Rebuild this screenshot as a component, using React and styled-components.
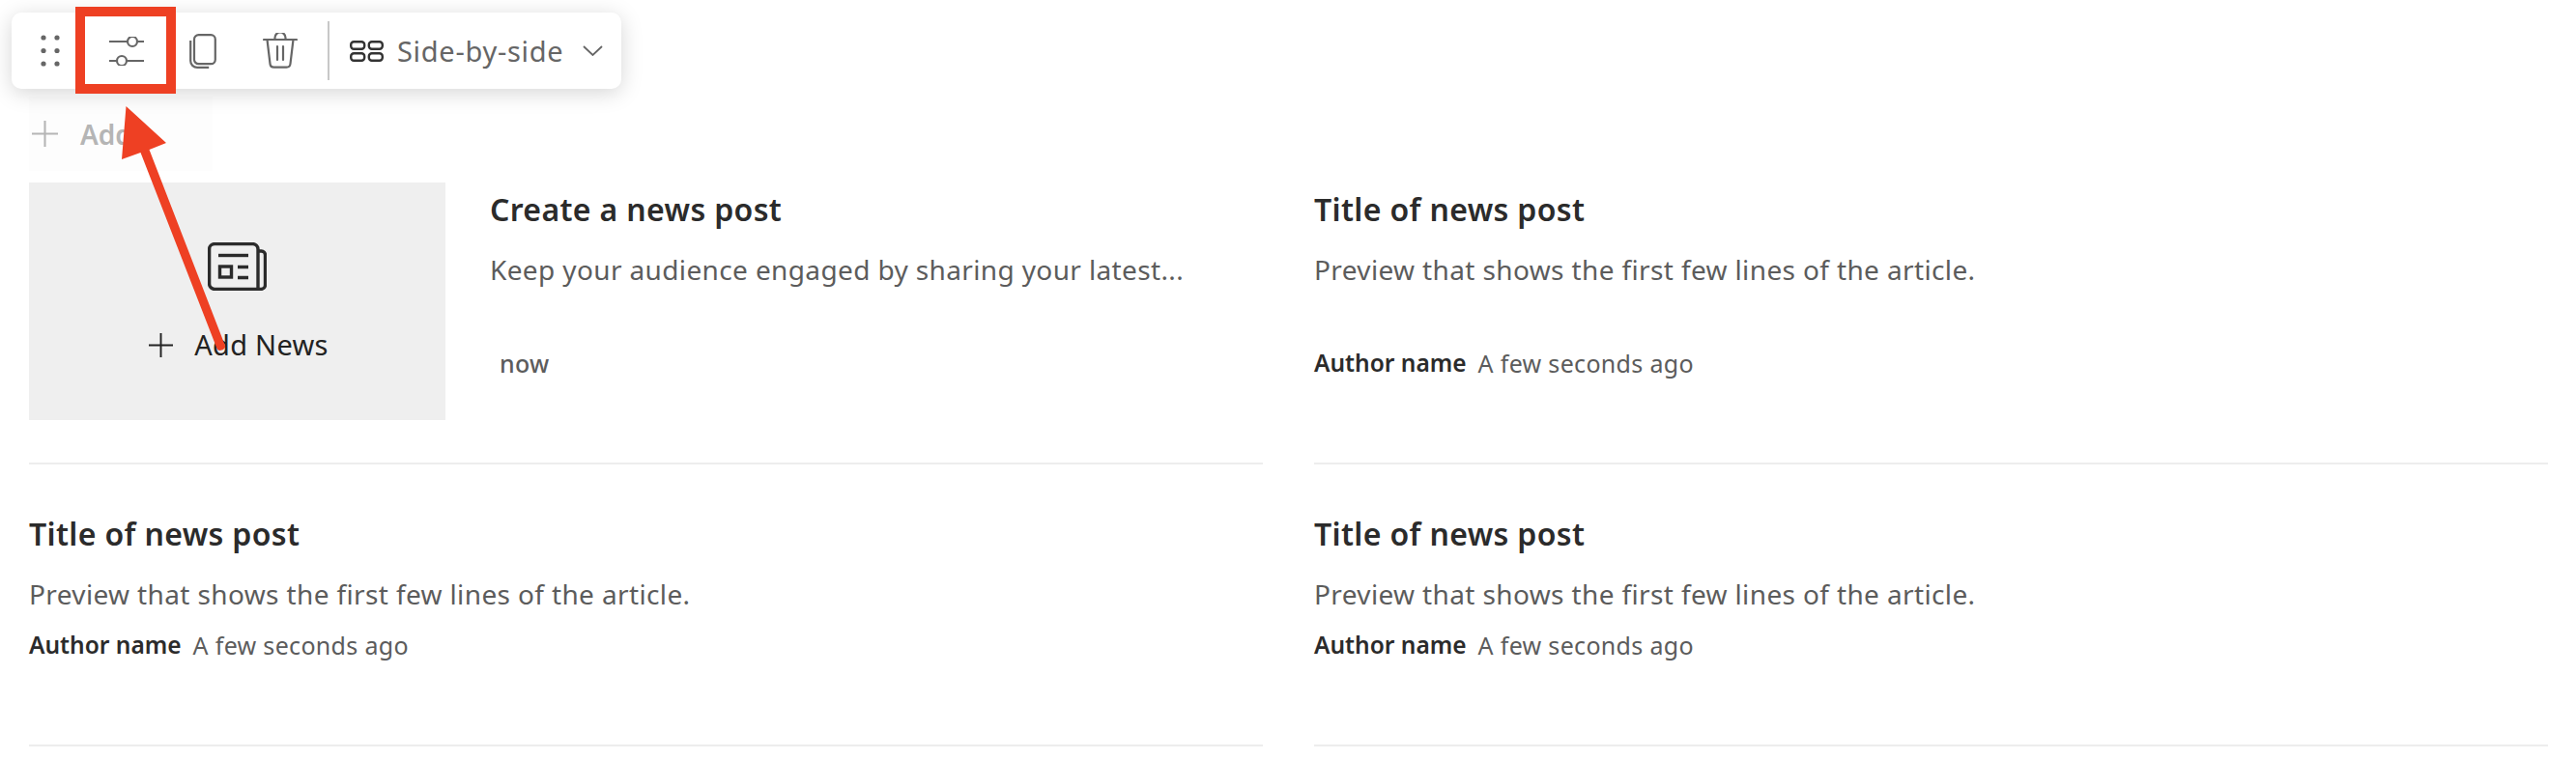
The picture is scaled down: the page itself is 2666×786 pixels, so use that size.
import React from "react";
import styled, { createGlobalStyle } from "styled-components";

const Global = createGlobalStyle`
  html, body { margin: 0; padding: 0; background: #fff; }
  body { font-family: "Noto Sans", "Open Sans", sans-serif; overflow: hidden; }
`;

const Page = styled.div`
  position: relative;
  width: 2666px;
  height: 786px;
  padding: 100px 29px 0 30px;
  box-sizing: border-box;
  overflow: hidden;
`;

const Toolbar = styled.div`
  position: absolute;
  left: 12px;
  top: 13px;
  width: 631px;
  height: 79px;
  display: flex;
  align-items: center;
  background: #fff;
  border-radius: 10px;
  box-shadow: 0 4px 22px rgba(0, 0, 0, 0.17);
  z-index: 3;
`;

const ToolButton = styled.div`
  width: ${(p) => p.$w}px;
  height: 100%;
  display: flex;
  align-items: center;
  justify-content: center;
  color: #666;
  flex: none;
`;

const ToolDivider = styled.div`
  width: 2px;
  height: 61px;
  margin-left: 9px;
  background: #c8c8c8;
  flex: none;
`;

const LayoutPicker = styled.div`
  display: flex;
  align-items: center;
  margin-left: 21px;
  color: #666;
`;

const LayoutLabel = styled.span`
  font-size: 29px;
  letter-spacing: 0.7px;
  line-height: 40px;
  color: #666;
  margin-left: 14px;
  margin-right: 20px;
  white-space: nowrap;
`;

const AddRow = styled.div`
  width: 190px;
  height: 77px;
  background: #fdfdfd;
  display: flex;
  align-items: center;
  padding-left: 3px;
  box-sizing: border-box;
  color: #b5b5b5;
`;

const AddLabel = styled.span`
  font-size: 28px;
  font-weight: 600;
  margin-left: 23px;
  color: #b5b5b5;
`;

const Grid = styled.div`
  display: grid;
  grid-template-columns: 1277px 1277px;
  column-gap: 53px;
  margin-top: 12px;
`;

const Card = styled.div`
  height: 292px;
  box-sizing: border-box;
  border-bottom: 2px solid #ededed;
  padding-top: ${(p) => p.$top}px;
  display: ${(p) => (p.$feature ? "flex" : "block")};
`;

const ImageBox = styled.div`
  width: 431px;
  height: 246px;
  background: #efefef;
  display: flex;
  flex-direction: column;
  align-items: center;
  padding-top: 62px;
  box-sizing: border-box;
  flex: none;
  color: #2b2b2b;
`;

const AddNews = styled.div`
  display: flex;
  align-items: center;
  margin-top: 36px;
  margin-left: 3px;
  color: #222;
`;

const AddNewsLabel = styled.span`
  font-size: 29px;
  letter-spacing: 0.3px;
  line-height: 40px;
  margin-left: 22px;
  color: #222;
`;

const FeatureText = styled.div`
  padding: 8px 0 0 46px;
`;

const Title = styled.div`
  font-size: 32px;
  font-weight: 600;
  letter-spacing: 0.35px;
  line-height: 40px;
  color: #2b2b2b;
  white-space: nowrap;
`;

const Preview = styled.div`
  font-size: 28px;
  letter-spacing: 0.37px;
  line-height: 38px;
  margin-top: 23px;
  color: #5c5c5c;
  white-space: nowrap;
`;

const Meta = styled.div`
  display: flex;
  gap: 12px;
  line-height: 34px;
  margin-top: ${(p) => p.$top}px;
  padding-left: ${(p) => p.$indent || 0}px;
`;

const Author = styled.span`
  font-size: 24.5px;
  font-weight: 600;
  color: #2b2b2b;
`;

const Time = styled.span`
  font-size: 25px;
  letter-spacing: 0.32px;
  color: #5c5c5c;
  font-weight: ${(p) => (p.$strong ? 500 : 400)};
`;

const Highlight = styled.div`
  position: absolute;
  left: 78px;
  top: 7px;
  width: 104px;
  height: 90px;
  box-sizing: border-box;
  border: 10px solid #ee4023;
  z-index: 4;
`;

const ArrowLayer = styled.svg`
  position: absolute;
  left: 0;
  top: 0;
  z-index: 5;
`;

const Grip = () => (
  <svg width="20" height="34" viewBox="0 0 20 34" fill="currentColor">
    {[3, 17].map((x) =>
      [3, 16.5, 30].map((y) => <circle key={`${x}-${y}`} cx={x} cy={y} r="2.6" />)
    )}
  </svg>
);

const Sliders = () => (
  <svg width="36" height="30" viewBox="0 0 36 30" fill="none" stroke="currentColor" strokeWidth="2.2">
    <path d="M0 5h18M30 5h6M0 25h7M19 25h17" />
    <circle cx="24" cy="5" r="5" />
    <circle cx="13" cy="25" r="5" />
  </svg>
);

const Copy = () => (
  <svg width="28" height="36" viewBox="0 0 28 36" fill="none" stroke="currentColor" strokeWidth="2.2">
    <rect x="5" y="1.2" width="21.8" height="30" rx="4.5" />
    <path d="M1.2 7v21c0 4 3 6.8 7 6.8h12" />
  </svg>
);

const Trash = () => (
  <svg width="36" height="37" viewBox="0 0 36 37" fill="none" stroke="currentColor" strokeWidth="2.2" strokeLinecap="round">
    <path d="M1 7h34M12.5 7V5a5 5 0 0 1 11 0v2M4.5 7l3 25a4 4 0 0 0 4 3.6h13a4 4 0 0 0 4-3.6l3-25M15 14v14M21 14v14" />
  </svg>
);

const SideBySide = () => (
  <svg width="35" height="22" viewBox="0 0 35 22" fill="none" stroke="#333" strokeWidth="2.4">
    <rect x="1.2" y="1.2" width="14" height="7.5" rx="3" />
    <rect x="19.8" y="1.2" width="14" height="7.5" rx="3" />
    <rect x="1.2" y="13.3" width="14" height="7.5" rx="3" />
    <rect x="19.8" y="13.3" width="14" height="7.5" rx="3" />
  </svg>
);

const Chevron = () => (
  <svg width="21" height="11" viewBox="0 0 21 11" fill="none" stroke="currentColor" strokeWidth="1.8">
    <path d="M1 1l9.5 9L20 1" />
  </svg>
);

const Plus = ({ size }) => (
  <svg width={size} height={size} viewBox="0 0 26 26" fill="none" stroke="currentColor" strokeWidth="2">
    <path d="M13 0v26M0 13h26" />
  </svg>
);

const News = () => (
  <svg width="61" height="50" viewBox="0 0 61 50" fill="none" stroke="currentColor" strokeWidth="3.4">
    <path d="M52 9h3.5a4 4 0 0 1 4 4v31a4.4 4.4 0 0 1-4.4 4.4H7a5.4 5.4 0 0 1-5.4-5.4V7A5.4 5.4 0 0 1 7 1.6h39.5A5.4 5.4 0 0 1 52 7v41" />
    <path d="M11 13.5h31" />
    <rect x="12.5" y="25" width="12" height="11" />
    <path d="M31 25.5h11M31 36.5h11" />
  </svg>
);

const Post = ({ top, meta }) => (
  <Card $top={top}>
    <Title>Title of news post</Title>
    <Preview>Preview that shows the first few lines of the article.</Preview>
    <Meta $top={meta}>
      <Author>Author name</Author>
      <Time>A few seconds ago</Time>
    </Meta>
  </Card>
);

export default function App() {
  return (
    <Page>
      <Global />
      <Toolbar>
        <ToolButton $w={80}><Grip /></ToolButton>
        <ToolButton $w={78}><Sliders /></ToolButton>
        <ToolButton $w={79}><Copy /></ToolButton>
        <ToolButton $w={81}><Trash /></ToolButton>
        <ToolDivider />
        <LayoutPicker>
          <SideBySide />
          <LayoutLabel>Side-by-side</LayoutLabel>
          <Chevron />
        </LayoutPicker>
      </Toolbar>
      <Highlight />
      <AddRow>
        <Plus size={27} />
        <AddLabel>Add</AddLabel>
      </AddRow>
      <Grid>
        <Card $top={0} $feature>
          <ImageBox>
            <News />
            <AddNews>
              <Plus size={25} />
              <AddNewsLabel>Add News</AddNewsLabel>
            </AddNews>
          </ImageBox>
          <FeatureText>
            <Title>Create a news post</Title>
            <Preview>Keep your audience engaged by sharing your latest...</Preview>
            <Meta $top={61} $indent={10}>
              <Time $strong>now</Time>
            </Meta>
          </FeatureText>
        </Card>
        <Post top={8} meta={61} />
        <Post top={52} meta={17} />
        <Post top={52} meta={17} />
      </Grid>
      <ArrowLayer width="300" height="380" viewBox="0 0 300 380">
        <path d="M130.5 110L172 148L154.5 155L233 358C234 362 226 365 224.5 361L145.5 158L126 165Z" fill="#ee4023" />
      </ArrowLayer>
    </Page>
  );
}
